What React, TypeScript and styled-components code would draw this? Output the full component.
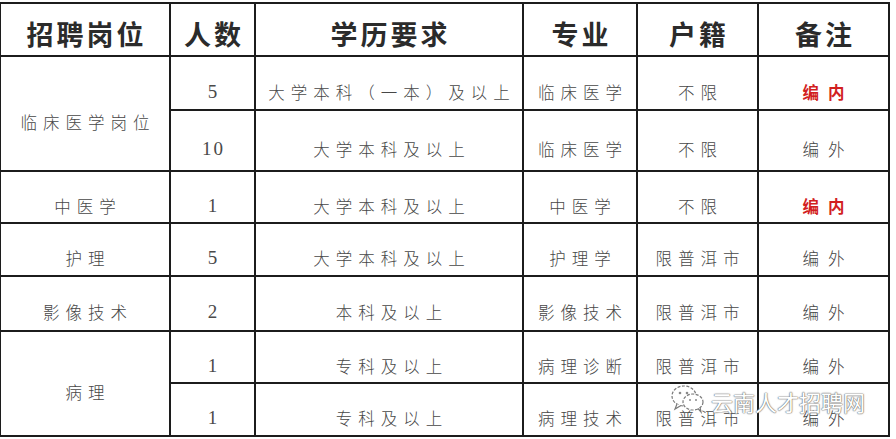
import React from "react";
import styled, { createGlobalStyle } from "styled-components";

const GlobalStyle = createGlobalStyle`
  html, body {
    margin: 0;
    padding: 0;
    background: #ffffff;
  }
`;

const Page = styled.div`
  position: relative;
  width: 896px;
  height: 439px;
  padding-top: 2px;
  box-sizing: border-box;
  background: #fff;
  overflow: hidden;
`;

const Table = styled.table`
  border-collapse: collapse;
  table-layout: fixed;
  width: 889px;
  margin-left: -1px;
  font-family: "Noto Sans CJK SC", sans-serif;
`;

const HeadCell = styled.th`
  border: 2px solid #1c1c1c;
  height: 53px;
  padding: 8px 0 0 3px;
  box-sizing: border-box;
  font-size: 27px;
  font-weight: 700;
  letter-spacing: 3px;
  color: #2b2b2b;
  text-align: center;
  vertical-align: middle;
`;

const Row = styled.tr<{ $h: number }>`
  height: ${(p) => p.$h}px;
`;

const Cell = styled.td<{ $wide?: boolean; $red?: boolean }>`
  border: 2px solid #1c1c1c;
  padding: 17px 0 0 ${(p) => (p.$wide ? 9 : 6)}px;
  box-sizing: border-box;
  font-size: 16.5px;
  font-weight: ${(p) => (p.$red ? 700 : 300)};
  letter-spacing: ${(p) => (p.$wide ? 9 : 6)}px;
  color: ${(p) => (p.$red ? "#d21f1f" : "#474747")};
  text-align: center;
  vertical-align: middle;
  white-space: nowrap;
`;

const NumCell = styled.td`
  border: 2px solid #1c1c1c;
  padding: 17px 0 0 2px;
  box-sizing: border-box;
  font-family: "Liberation Serif", serif;
  font-size: 19px;
  letter-spacing: 2px;
  color: #4a4a4a;
  text-align: center;
  vertical-align: middle;
`;

const Watermark = styled.div`
  position: absolute;
  left: 670px;
  top: 381px;
  display: flex;
  align-items: center;
  gap: 5px;
`;

const WatermarkText = styled.span`
  font-family: "Noto Sans CJK SC", sans-serif;
  font-size: 22px;
  color: #ffffff;
  text-shadow: 0 0 1px #6a6a6a, 0 0 1px #6a6a6a, 0 0 2px #9a9a9a;
  margin-top: 4px;
`;

const WeChatIcon = () => (
  <svg width="36" height="30" viewBox="0 0 36 30">
    <ellipse cx="14" cy="12" rx="12" ry="10" fill="#fff" stroke="#7a7a7a" strokeWidth="1.2" strokeDasharray="3 1.5" />
    <path d="M7 20 L5 25 L11 21.5" fill="#fff" stroke="#7a7a7a" strokeWidth="1.2" />
    <ellipse cx="23" cy="18" rx="10" ry="8" fill="#fff" stroke="#7a7a7a" strokeWidth="1.2" strokeDasharray="3 1.5" />
    <path d="M28 24.5 L31 28 L30 23" fill="#fff" stroke="#7a7a7a" strokeWidth="1.2" />
    <circle cx="10" cy="9" r="1.3" fill="#8a8a8a" />
    <circle cx="17" cy="9" r="1.3" fill="#8a8a8a" />
    <circle cx="20" cy="16" r="1" fill="#8a8a8a" />
    <circle cx="26" cy="16" r="1" fill="#8a8a8a" />
  </svg>
);

type Line = {
  post?: string;
  span?: number;
  count: string;
  edu: string;
  major: string;
  hukou: string;
  note: string;
  h: number;
};

const lines: Line[] = [
  { post: "临床医学岗位", span: 2, count: "5", edu: "大学本科（一本）及以上", major: "临床医学", hukou: "不限", note: "编内", h: 54 },
  { count: "10", edu: "大学本科及以上", major: "临床医学", hukou: "不限", note: "编外", h: 61 },
  { post: "中医学", count: "1", edu: "大学本科及以上", major: "中医学", hukou: "不限", note: "编内", h: 52 },
  { post: "护理", count: "5", edu: "大学本科及以上", major: "护理学", hukou: "限普洱市", note: "编外", h: 53 },
  { post: "影像技术", count: "2", edu: "本科及以上", major: "影像技术", hukou: "限普洱市", note: "编外", h: 55 },
  { post: "病理", span: 2, count: "1", edu: "专科及以上", major: "病理诊断", hukou: "限普洱市", note: "编外", h: 52 },
  { count: "1", edu: "专科及以上", major: "病理技术", hukou: "限普洱市", note: "编外", h: 53 },
];

const App = () => {
  return (
    <Page>
      <GlobalStyle />
      <Table>
        <colgroup>
          <col style={{ width: 170 }} />
          <col style={{ width: 85 }} />
          <col style={{ width: 268 }} />
          <col style={{ width: 114 }} />
          <col style={{ width: 121 }} />
          <col style={{ width: 131 }} />
        </colgroup>
        <thead>
          <tr>
            <HeadCell>招聘岗位</HeadCell>
            <HeadCell>人数</HeadCell>
            <HeadCell>学历要求</HeadCell>
            <HeadCell>专业</HeadCell>
            <HeadCell>户籍</HeadCell>
            <HeadCell>备注</HeadCell>
          </tr>
        </thead>
        <tbody>
          {lines.map((l, i) => (
            <Row key={i} $h={l.h}>
              {l.post && <Cell rowSpan={l.span}>{l.post}</Cell>}
              <NumCell>{l.count}</NumCell>
              <Cell>{l.edu}</Cell>
              <Cell>{l.major}</Cell>
              <Cell>{l.hukou}</Cell>
              <Cell $wide $red={l.note === "编内"}>
                {l.note}
              </Cell>
            </Row>
          ))}
        </tbody>
      </Table>
      <Watermark>
        <WeChatIcon />
        <WatermarkText>云南人才招聘网</WatermarkText>
      </Watermark>
    </Page>
  );
};

export default App;
